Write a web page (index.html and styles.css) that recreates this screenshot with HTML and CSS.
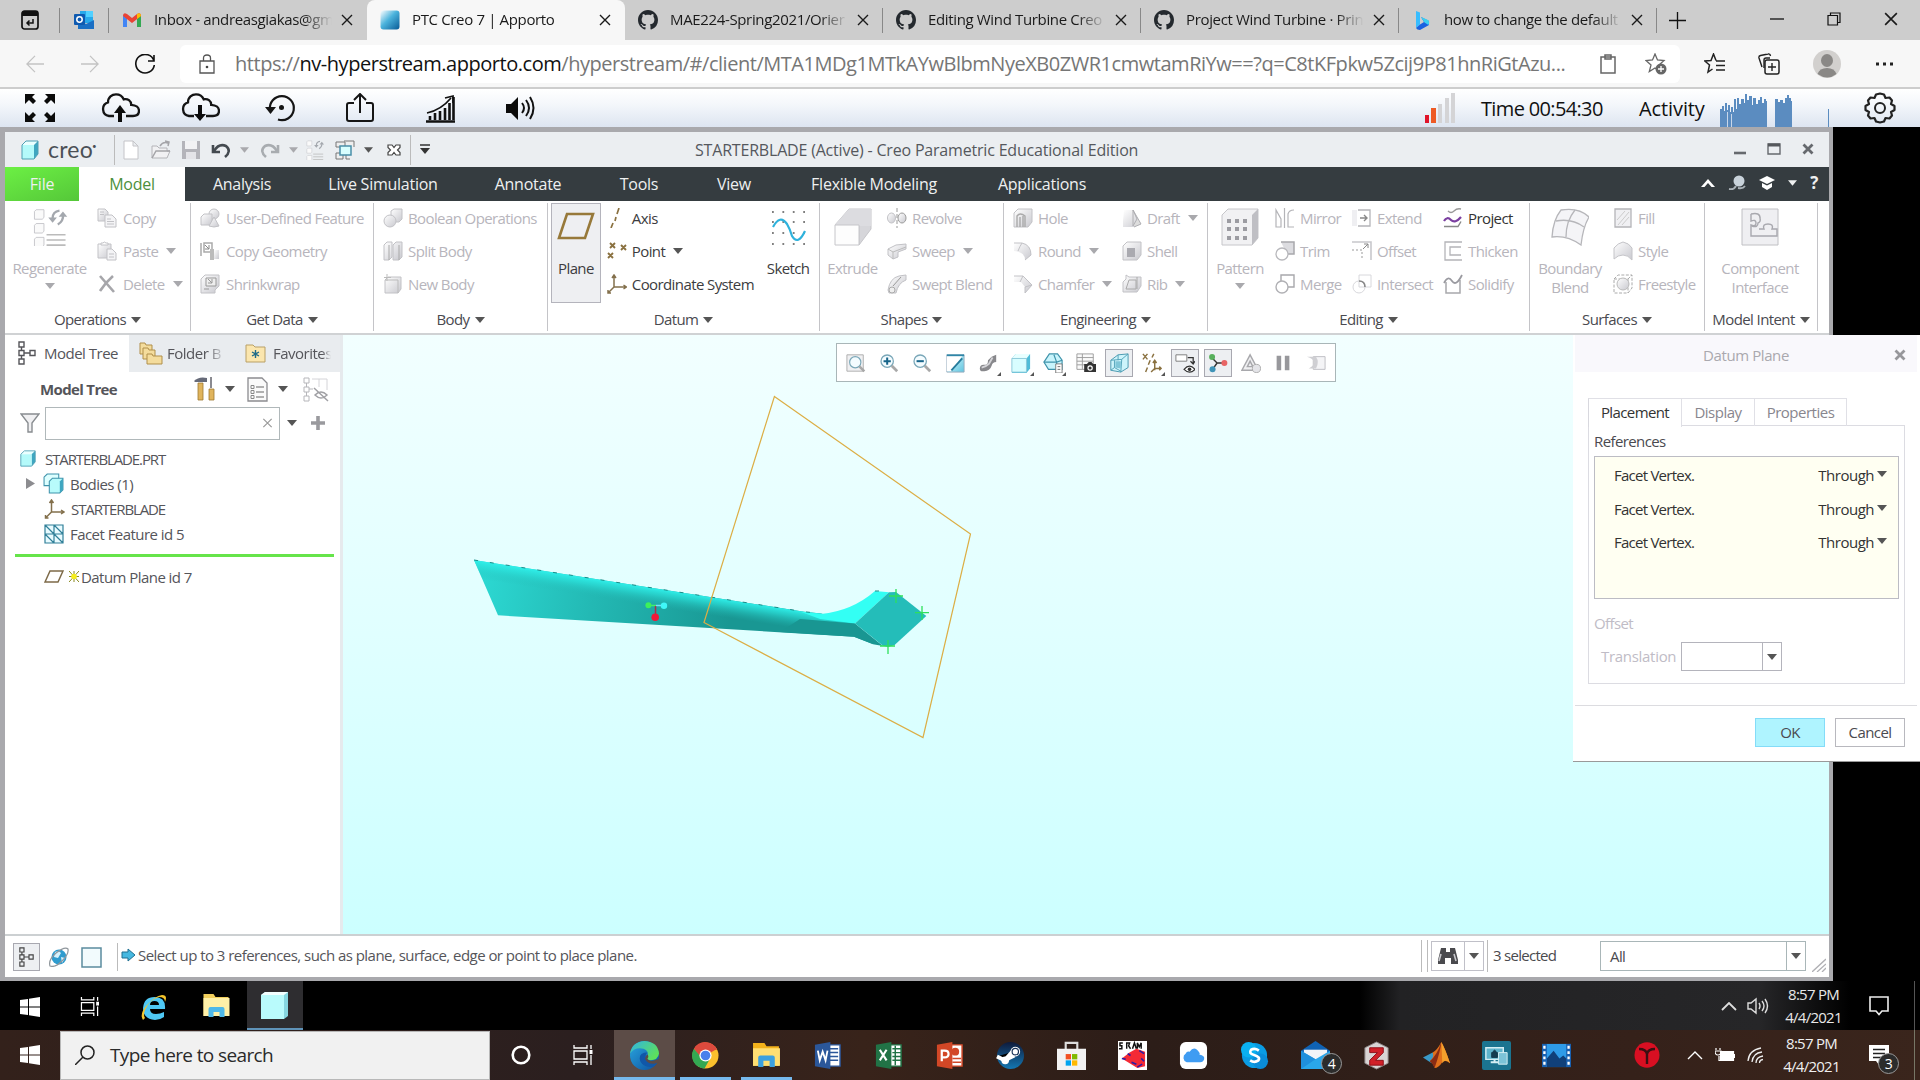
FILE: index.html
```html
<!DOCTYPE html>
<html lang="en">
<head>
<meta charset="utf-8">
<title>PTC Creo 7 | Apporto</title>
<link rel="stylesheet" href="styles.css">
</head>
<body>
<svg class="defs" aria-hidden="true">
<defs>
<linearGradient id="gCyan" x1="0" y1="0" x2="1" y2="1"><stop offset="0" stop-color="#e6ffff"/><stop offset="1" stop-color="#5fc4e0"/></linearGradient>
<linearGradient id="gSky" x1="0" y1="0" x2="1" y2="1"><stop offset="0" stop-color="#fff"/><stop offset=".45" stop-color="#4bb3dc"/><stop offset="1" stop-color="#075a96"/></linearGradient>
<linearGradient id="gGrey" x1="0" y1="0" x2="1" y2="1"><stop offset="0" stop-color="#fff"/><stop offset="1" stop-color="#c9c9cf"/></linearGradient>
<linearGradient id="gBlade" gradientUnits="userSpaceOnUse" x1="480" y1="580" x2="730" y2="620"><stop offset="0" stop-color="#2cd8d2"/><stop offset=".45" stop-color="#23b9b4"/><stop offset="1" stop-color="#199793"/></linearGradient>
<linearGradient id="gTop" gradientUnits="userSpaceOnUse" x1="600" y1="579.500" x2="597.200" y2="597.500"><stop offset="0" stop-color="#2ff0ea"/><stop offset=".35" stop-color="#2be0da" stop-opacity=".7"/><stop offset="1" stop-color="#23b9b4" stop-opacity="0"/></linearGradient>
<linearGradient id="gEdge" x1="0" y1="0" x2="1" y2="1"><stop offset="0" stop-color="#2aa8e0"/><stop offset="1" stop-color="#0c4f9e"/></linearGradient>
<linearGradient id="gEdge2" x1="0" y1="0" x2="1" y2=".6"><stop offset="0" stop-color="#2fb4e6"/><stop offset="1" stop-color="#5ee05a"/></linearGradient>
<linearGradient id="gSteam" x1="0" y1="0" x2="0" y2="1"><stop offset="0" stop-color="#0f1a3a"/><stop offset="1" stop-color="#1478b4"/></linearGradient>
<symbol id="x" viewBox="0 0 12 12"><path d="M1 1l10 10M11 1L1 11" fill="none" stroke="currentColor" stroke-width="1.4"/></symbol>
<symbol id="dn" viewBox="0 0 10 6"><path d="M0 0h10L5 6z" fill="currentColor"/></symbol>
<symbol id="gh" viewBox="0 0 16 16"><path fill="#24292e" d="M8 0C3.58 0 0 3.58 0 8c0 3.54 2.29 6.53 5.47 7.59.4.07.55-.17.55-.38 0-.19-.01-.82-.01-1.49-2.01.37-2.53-.49-2.69-.94-.09-.23-.48-.94-.82-1.13-.28-.15-.68-.52-.01-.53.63-.01 1.08.58 1.23.82.72 1.21 1.87.87 2.33.66.07-.52.28-.87.51-1.07-1.78-.2-3.64-.89-3.64-3.95 0-.87.31-1.59.82-2.15-.08-.2-.36-1.02.08-2.12 0 0 .67-.21 2.2.82.64-.18 1.32-.27 2-.27s1.36.09 2 .27c1.53-1.04 2.2-.82 2.2-.82.44 1.1.16 1.92.08 2.12.51.56.82 1.27.82 2.15 0 3.07-1.87 3.75-3.65 3.95.29.25.54.73.54 1.48 0 1.07-.01 1.93-.01 2.2 0 .21.15.46.55.38A8.01 8.01 0 0016 8c0-4.42-3.58-8-8-8z"/></symbol>
<symbol id="cloud" viewBox="0 0 40 30"><path d="M14 23H9a7 7 0 0 1-1-13.600C8 4 12 1.300 16 1.300c4 0 6.500 2 7.700 5 4-1 7.500 1.500 7.500 5.500 5 .2 7.800 3 7.800 6 0 3.500-2.500 5.200-6 5.200h-7" fill="none" stroke="#151515" stroke-width="2.300"/></symbol>
<symbol id="cube" viewBox="0 0 20 20"><path d="M2 5l4-4h12l-4 4z" fill="#eaffff"/><path d="M14 5l4-4v13l-4 5z" fill="#3fa6c0"/><path d="M2 5h12v14H2z" fill="#b4fafa"/><path d="M2 5l4-4h12v13l-4 5H2z" fill="none" stroke="#4f9fb4" stroke-width="1"/></symbol>
<symbol id="win" viewBox="0 0 20 20"><path d="M0 3l8-1v7.500H0zM9 1.800L20 0v9.500H9zM0 10.500h8V18l-8-1zM9 10.500h11V20L9 18.200z" fill="#fff"/></symbol>
<symbol id="tview" viewBox="0 0 20 20"><path d="M1 0v3h13V0M1 20v-3h13v3M1 6h13v8H1zM18 0v4M18 10v10" fill="none" stroke="#fff" stroke-width="1.300"/><path d="M16.500 5h3v4h-3z" fill="#fff"/></symbol>
<symbol id="folder" viewBox="0 0 28 28"><path d="M1 2h11l2 3h12v19H1z" fill="#f3b21b"/><path d="M1 7h26v17H1z" fill="#ffdf73"/><path d="M6 25v-9q0-2 2-2h12q2 0 2 2v9h-5v-6h-6v6z" fill="#3ba0e0"/></symbol>
<symbol id="tree" viewBox="0 0 18 24"><path d="M1 1h5v5H1zM1 9.500h5v5H1zM1 18h5v5H1zM12 9.500h5v5h-5zM3.500 6v3.500M3.500 14.500V18M6 12h6" fill="none" stroke="currentColor" stroke-width="1.400"/></symbol>
<symbol id="csys" viewBox="0 0 20 20"><path d="M7 13V2M7 13h12M7 13l-6 6M5 4l2-3 2 3M16.500 11l3 2-3 2M1 16v3h3" fill="none" stroke="#83704c" stroke-width="1.500"/></symbol>
<symbol id="copy" viewBox="0 0 20 20"><path d="M1 1h7l3 3v9H1z" fill="url(#gGrey)" stroke="currentColor"/><path d="M8 7h7l4 4v8H8zM10 11h4M10 13.500h7M10 16h7M3 4h4M3 6.500h4" fill="#f4f4f6" stroke="currentColor"/></symbol>
<symbol id="paste" viewBox="0 0 20 20"><path d="M1 3h13v14H1z" fill="url(#gGrey)" stroke="currentColor"/><path d="M4 4V2h2q1-2 3 0h2v2z" fill="#fff" stroke="currentColor"/><path d="M10 8h5l4 4v7h-9zM12 13h5M12 16h5" fill="#f4f4f6" stroke="currentColor"/></symbol>
<symbol id="del" viewBox="0 0 20 20"><path d="M3 2q7 8 14 16M16 2Q8 9 3 17" fill="none" stroke="#a6a6aa" stroke-width="2.600"/></symbol>
<symbol id="udf" viewBox="0 0 20 20"><circle cx="14" cy="6" r="5" fill="url(#gGrey)" stroke="currentColor"/><path d="M1 9l3-3h8v9l-2 2H1z" fill="url(#gGrey)" stroke="currentColor"/><path d="M14 9l5 9q-5 2-10 0z" fill="url(#gGrey)" stroke="currentColor"/></symbol>
<symbol id="cgeo" viewBox="0 0 20 20"><path d="M1 2v13M4 2h8v9H4z" fill="none" stroke="#aaa" stroke-width="1.500"/><path d="M5 4l4 4M9 4v4H5" stroke="#888" fill="none"/><path d="M10 8h4v11h-4z" fill="#bbb"/><path d="M14 9h5v9h-5z" fill="url(#gGrey)"/></symbol>
<symbol id="shr" viewBox="0 0 20 20"><path d="M1 5l4-4h14v11l-4 4v3H1z" fill="url(#gGrey)" stroke="currentColor"/><path d="M6 4h10v8H6zM8 5l4 4M12 5v4H8M4 15h5" fill="#eee" stroke="#999"/></symbol>
<symbol id="bool" viewBox="0 0 20 20"><path d="M8 3l3-2h8v10l-3 3H8z" fill="url(#gGrey)" stroke="currentColor"/><circle cx="7" cy="13" r="6" fill="url(#gGrey)" stroke="currentColor"/></symbol>
<symbol id="split" viewBox="0 0 20 20"><path d="M1 4l3-3h5v15l-3 3H1zM10 4l3-3h6v15l-3 3h-6z" fill="url(#gGrey)" stroke="currentColor"/><path d="M6 4v15M16 4v15" stroke="#aaa"/></symbol>
<symbol id="newb" viewBox="0 0 20 20"><path d="M2 6l3-3h13v12l-3 4H2z" fill="url(#gGrey)" stroke="currentColor"/><path d="M2 6h13v13" fill="none" stroke="#bbb"/><path d="M4 0v7M1 3.500h7" stroke="#bbb"/></symbol>
<symbol id="rev" viewBox="0 0 20 20"><path d="M10 0v20" stroke="#999" stroke-dasharray="4 2"/><ellipse cx="4.500" cy="10" rx="4" ry="5" fill="url(#gGrey)" stroke="currentColor"/><ellipse cx="15" cy="10" rx="4" ry="5" fill="url(#gGrey)" stroke="#999"/></symbol>
<symbol id="sweep" viewBox="0 0 20 20"><path d="M1 8l8-4 10-1v5l-8 3v5l-5 2-5-4z" fill="url(#gGrey)" stroke="currentColor"/><path d="M1 8l5 3 13-5M6 11v7" fill="none" stroke="#bbb"/></symbol>
<symbol id="sblend" viewBox="0 0 20 20"><path d="M1 16q2-12 11-14l7-1v5q-8 3-10 13H2z" fill="url(#gGrey)" stroke="currentColor"/><circle cx="5" cy="16" r="3" fill="#eee" stroke="#aaa"/><path d="M6 12l8-9" stroke="#999"/></symbol>
<symbol id="hole" viewBox="0 0 20 20"><path d="M1 5l4-4h14v13l-4 5H1z" fill="url(#gGrey)" stroke="currentColor"/><path d="M4 19V8q3-4 8 0v11M7 19V9M10 8v11" fill="none" stroke="#aaa" stroke-width="1.400"/></symbol>
<symbol id="round" viewBox="0 0 20 20"><path d="M1 2h8q9 2 9 12l-6 5q0-8-11-9z" fill="url(#gGrey)"/><path d="M1 2h8q9 2 9 12l-6 5M9 2q-2 3-4 8" fill="none" stroke="currentColor"/></symbol>
<symbol id="cham" viewBox="0 0 20 20"><path d="M1 2h9l9 9-7 8v-6l-4-5H1z" fill="url(#gGrey)"/><path d="M1 2h9l9 9-7 8v-6M10 2L7 8M19 11l-7 2" fill="none" stroke="currentColor"/></symbol>
<symbol id="draft" viewBox="0 0 20 20"><path d="M2 2h9l8 14-7 3H1v-6z" fill="url(#gGrey)"/><path d="M11 2v16l4-7zM11 2l8 14-7 3" fill="#ddd" stroke="#b0b0b4"/></symbol>
<symbol id="shell" viewBox="0 0 20 20"><path d="M1 5l4-4h14v13l-4 5H1z" fill="url(#gGrey)" stroke="currentColor"/><path d="M5 7h8v9H5z" fill="#aaaab0"/></symbol>
<symbol id="rib" viewBox="0 0 20 20"><path d="M1 8l3-3V1l3 2h12v9l-4 6H1z" fill="url(#gGrey)" stroke="currentColor"/><path d="M4 15l3-9h7v9zM15 3v12" fill="none" stroke="#aaa"/></symbol>
<symbol id="mirror" viewBox="0 0 20 20"><path d="M1 19V2l5 9v8zM19 19h-6V6q1-4 6-4M9.500 0v20" fill="none" stroke="#b4b4b8" stroke-width="1.200"/></symbol>
<symbol id="trim" viewBox="0 0 20 20"><path d="M6 1h13v12h-7" fill="#dcdce0" stroke="#a8a8ac" stroke-width="1.500"/><circle cx="7" cy="13" r="6" fill="#fff" stroke="#b8b8bc" stroke-width="1.300"/></symbol>
<symbol id="merge" viewBox="0 0 20 20"><path d="M6 7V1h13v12h-6" fill="none" stroke="#a8a8ac" stroke-width="1.400"/><circle cx="7" cy="13" r="6" fill="none" stroke="#b0b0b4" stroke-width="1.400"/></symbol>
<symbol id="ext" viewBox="0 0 20 20"><path d="M0 2h5v16H0" fill="#efeff2"/><path d="M6 2h12v16H6" fill="none" stroke="#b4b4b8" stroke-width="1.300"/><path d="M8 10h7M12 7l3 3-3 3" fill="none" stroke="#888" stroke-width="1.400"/></symbol>
<symbol id="off" viewBox="0 0 20 20"><path d="M0 1h19v18" fill="none" stroke="#c8c8cc" stroke-width="1.600"/><path d="M0 9h10v10" fill="none" stroke="#999" stroke-dasharray="2 2"/><path d="M11 8l5-5M12 3h4v4" fill="none" stroke="#888"/></symbol>
<symbol id="inter" viewBox="0 0 20 20"><path d="M7 1h12v12H7z" fill="none" stroke="#d8d8dc"/><circle cx="7" cy="13" r="6" fill="none" stroke="#d8d8dc"/><path d="M7 7q6 0 6 6" fill="none" stroke="#888" stroke-width="1.600"/></symbol>
<symbol id="proj" viewBox="0 0 20 20"><path d="M5 3q3 3 6 0t7-2" fill="none" stroke="#999" stroke-width="1.300"/><path d="M1 13q3-5 7-1t10-3" fill="none" stroke="#7b3fa0" stroke-width="2.200"/><path d="M1 18.500h14l3-5" fill="none" stroke="#888" stroke-width="1.400"/></symbol>
<symbol id="thick" viewBox="0 0 20 20"><path d="M19 1H2v18h17M18 6H7v8h11" fill="none" stroke="#b4b4b8" stroke-width="1.300"/></symbol>
<symbol id="solid" viewBox="0 0 20 20"><path d="M3 8v11h14V6" fill="none" stroke="#a8a8ac" stroke-width="1.500"/><path d="M1 9q4-8 8-2t10-6" fill="none" stroke="#9a9aa0" stroke-width="1.800"/></symbol>
<symbol id="fill" viewBox="0 0 20 20"><path d="M2 1h16v18H2z" fill="#f0f0f3" stroke="#b4b4b8" stroke-width="1.300"/><path d="M4 12l8-9M5 17L16 4M9 17l7-8" stroke="#ccc"/></symbol>
<symbol id="style" viewBox="0 0 20 20"><path d="M1 7q4-5 9-6 6 1 9 6v12q-4-5-9-5t-9 4z" fill="url(#gGrey)" stroke="#c4c4c8"/></symbol>
<symbol id="free" viewBox="0 0 20 20"><path d="M1 5l4-4h14v13l-4 5H1zM1 5h14v14M15 5l4-4" fill="none" stroke="#aaa" stroke-dasharray="3 1.500"/><circle cx="10" cy="10" r="6" fill="url(#gGrey)" stroke="#bbb"/></symbol>
<symbol id="mag" viewBox="0 0 22 22"><circle cx="9" cy="9" r="6.800" fill="#f4fcff" stroke="#7aa7b8" stroke-width="1.400"/><path d="M14 14l6 6" stroke="#a8a8a8" stroke-width="3"/></symbol>
<symbol id="bodies" viewBox="0 0 20 20"><path d="M1 4l3-3h11v11H1z" fill="#dff" stroke="#3f93ab"/><path d="M6 8l3-3h10v11l-3 3H6z" fill="#b8fbfb" stroke="#3f93ab"/><path d="M16 8l3-3v11l-3 3z" fill="#3fa6c0"/></symbol>
<symbol id="regen" viewBox="0 0 38 44"><path d="M1 4l2-2h9v9l-2 2H1zM1 20l2-2h9v9l-2 2H1zM1 36l2-2h9v9l-2 2H1z" fill="#fafafa" stroke="#c2c2c6"/><path d="M15 31h22M15 37h22M15 43h22" stroke="#bbb" stroke-width="1.800"/><path d="M22 12q0-8 8-9M34 7q1 8-6 12" fill="none" stroke="#a4a8ae" stroke-width="2.600"/><path d="M17 11h10l-5 6zM29 10h10l-5-6z" fill="#a4a8ae"/></symbol>
</defs>
</svg>

<div class="tabs">
  <div class="pin p1"><svg width="20" height="20" viewBox="0 0 20 20"><rect x="2" y="1" width="16" height="18" rx="2.500" fill="none" stroke="#111" stroke-width="1.700"/><path d="M2 6V3q0-2 2-2h12q2 0 2 2v3z" fill="#111"/><path d="M13 9v4H7M9.500 10.500L7 13l2.500 2.500" fill="none" stroke="#111" stroke-width="1.500"/></svg></div>
  <div class="pin p2"><svg width="20" height="20" viewBox="0 0 20 20"><path d="M6 1h13v12H6z" fill="#28a8ea"/><path d="M12 1h7v6h-7z" fill="#50d0ff"/><path d="M4 10l8 4 8-4v9H4z" fill="#1a6fc4"/><rect x="0" y="4" width="11" height="11" rx="1" fill="#0f5ab0"/><circle cx="5.500" cy="9.500" r="2.700" fill="none" stroke="#fff" stroke-width="1.500"/></svg></div>
  <div class="tab"><svg class="fav" viewBox="0 0 20 16"><path d="M1 15V3l4 3v9z" fill="#4285f4"/><path d="M15 15V6l4-3v12z" fill="#34a853"/><path d="M1 4q0-4 4-2l5 4 5-4q4-2 4 2l-9 7z" fill="#ea4335"/><path d="M15 2q4-2 4 2l-4 3z" fill="#fbbc04"/></svg><span class="tt">Inbox - andreasgiakas@gm</span><svg class="cx"><use href="#x"/></svg></div>
  <div class="tab on"><svg class="fav" viewBox="0 0 20 20"><rect x=".5" y=".5" width="19" height="19" rx="3" fill="url(#gSky)"/></svg><span class="tt">PTC Creo 7 | Apporto</span><svg class="cx"><use href="#x"/></svg></div>
  <div class="tab"><svg class="fav"><use href="#gh"/></svg><span class="tt">MAE224-Spring2021/Orier</span><svg class="cx"><use href="#x"/></svg></div>
  <div class="tab"><svg class="fav"><use href="#gh"/></svg><span class="tt">Editing Wind Turbine Creo</span><svg class="cx"><use href="#x"/></svg></div>
  <div class="tab"><svg class="fav"><use href="#gh"/></svg><span class="tt">Project Wind Turbine · Prin</span><svg class="cx"><use href="#x"/></svg></div>
  <div class="tab"><svg class="fav" viewBox="0 0 20 20"><path d="M4 1l4 1.500v12L4 18z" fill="#37bdff"/><path d="M4 18l4-3.500 4-2.500-3-5 8 4v4l-9 5q-3 0-4-2z" fill="#1b62e0"/><path d="M9 7l7 3q2 1.500.500 5l-4-2.500z" fill="#3cd0f0"/></svg><span class="tt">how to change the default</span><svg class="cx"><use href="#x"/></svg></div>
  <svg class="plus" viewBox="0 0 18 18"><path d="M9 0v18M0 9h18" stroke="#111" stroke-width="1.400"/></svg>
  <div class="winbtns"><svg width="14" height="14" viewBox="0 0 14 14"><path d="M0 7h14" stroke="#111" stroke-width="1.300"/></svg><svg width="14" height="14" viewBox="0 0 14 14"><path d="M1 3.500h9.500V13H1zM3.500 3.500V1H13v9.500h-2.500" fill="none" stroke="#111" stroke-width="1.200"/></svg><svg width="14" height="14"><use href="#x"/></svg></div>
</div>

<div class="address">
  <svg class="nav" viewBox="0 0 20 20"><path d="M20 10H1M10 1l-9 9 9 9" fill="none" stroke="#c3c3c3" stroke-width="1.400"/></svg>
  <svg class="nav" viewBox="0 0 20 20"><path d="M0 10h19M10 1l9 9-9 9" fill="none" stroke="#c3c3c3" stroke-width="1.400"/></svg>
  <svg class="nav dark" viewBox="0 0 20 20"><path d="M19 7A9.300 9.300 0 1 0 19.300 11M19 1v6h-6" fill="none" stroke="#111" stroke-width="1.600"/></svg>
  <div class="urlbox">
    <svg width="16" height="20" viewBox="0 0 16 20"><path d="M1 7h14v12H1zM4.500 7V4q0-3 3.500-3t3.500 3v3" fill="none" stroke="#555" stroke-width="1.300"/><circle cx="8" cy="13" r="1.300" fill="#444"/></svg>
    <div class="url">https://<b>nv-hyperstream.apporto.com</b>/hyperstream/#/client/MTA1MDg1MTkAYwBlbmNyeXB0ZWR1cmwtamRiYw==?q=C8tKFpkw5Zcij9P81hnRiGtAzu...</div>
    <svg width="16" height="20" viewBox="0 0 16 20"><path d="M1 3h14v16H1zM5 1h6v4H5z" fill="none" stroke="#666" stroke-width="1.500"/></svg>
    <svg class="star" width="22" height="22" viewBox="0 0 22 22"><path d="M10 1l2.500 6 6.500.6-5 4.400 1.500 6.500L10 15l-5.700 3.500L6 12 1 7.600l6.500-.6z" fill="none" stroke="#666" stroke-width="1.300"/><circle cx="16" cy="16" r="5.500" fill="#666"/><path d="M16 13v6M13 16h6" stroke="#fff" stroke-width="1.300"/></svg>
  </div>
  <div class="tools">
    <svg width="22" height="22" viewBox="0 0 22 22"><path d="M12 7.500L9.500 1 7 7.500.800 8 5.500 12l-1.500 7 4.500-3M12 8h9M12 12.500h9M12 17h9" fill="none" stroke="#222" stroke-width="1.500"/></svg>
    <svg width="22" height="22" viewBox="0 0 22 22"><path d="M4 14l-3-9q-.500-2 1.500-2.500L10 1q2-.500 2.500 2M6 15V7q0-2 2-2h4" fill="none" stroke="#222" stroke-width="1.400"/><rect x="7" y="7" width="14" height="14" rx="2" fill="none" stroke="#222" stroke-width="1.500"/><path d="M14 10v8M10 14h8" stroke="#222" stroke-width="1.400"/></svg>
    <svg width="28" height="28" viewBox="0 0 28 28"><circle cx="14" cy="14" r="14" fill="#d2d0ce"/><ellipse cx="14" cy="10.500" rx="6" ry="6.500" fill="#8a8886"/><path d="M4.500 24q2-6 9.500-6t9.500 6q-9 7-19 0z" fill="#8a8886"/></svg>
    <svg width="18" height="4" viewBox="0 0 18 4"><path d="M0 .5h3v3H0zM7 .5h3v3H7zM14 .5h3v3h-3z" fill="#222"/></svg>
  </div>
</div>

<div class="apporto">
  <svg viewBox="0 0 40 30"><path d="M5 1h10l-3 3 4 4-3 3-4-4-4 4zM35 1H25l3 3-4 4 3 3 4-4 4 4zM5 29h10l-3-3 4-4-3-3-4 4-4-4zM35 29H25l3-3-4-4 3-3 4 4 4-4z" fill="#0b0b0b"/></svg>
  <svg viewBox="0 0 40 30"><use href="#cloud"/><path d="M20 12l6 8h-4v9h-4v-9h-4z" fill="#0b0b0b"/></svg>
  <svg viewBox="0 0 40 30"><use href="#cloud"/><path d="M20 28l6-7h-4v-9h-4v9h-4z" fill="#0b0b0b"/></svg>
  <svg viewBox="0 0 40 30"><path d="M10 17A12 12 0 1 1 18 26.500" fill="none" stroke="#151515" stroke-width="2.200"/><path d="M5 14h11l-5.500 7z" fill="#151515"/><circle cx="21.500" cy="14.500" r="2.500" fill="#151515"/></svg>
  <svg viewBox="0 0 40 30"><path d="M14 10H9q-2 0-2 2v14q0 2 2 2h22q2 0 2-2V12q0-2-2-2h-5M20 20V2M14 7l6-6 6 6" fill="none" stroke="#151515" stroke-width="2"/></svg>
  <svg viewBox="0 0 40 30"><path d="M6 28.500h29M10 27v-4M15 27v-7M20 27v-9M25 27V15M29.500 27V10M33.500 27V4" stroke="#111" stroke-width="2.600"/><path d="M7 20Q21 17 31 5M25 5l8-2v7" fill="none" stroke="#111" stroke-width="1.700"/></svg>
  <svg viewBox="0 0 40 30"><path d="M6 11h5l7-7v23l-7-7H6z" fill="#0b0b0b"/><path d="M22 10q4 5 0 10M26 7q6 8 0 16M30 4q7 11 0 22" fill="none" stroke="#111" stroke-width="2"/></svg>
  <div class="fillgap"></div>
  <svg class="sig" viewBox="0 0 30 30"><path d="M0 22h4v8H0z" fill="#e0142a"/><path d="M6 15h5v15H6z" fill="#ee5a24"/><path d="M13 11h4v19h-4zM20 5h4v25h-4zM26 0h4v30h-4z" fill="#d4d4d6"/></svg>
  <span class="atime">Time 00:54:30</span><span class="aact">Activity</span>
  <svg class="spark" viewBox="0 0 110 33" preserveAspectRatio="none"><path d="M0 33V15h2v-3h2v5h1V9h2v7h1V11h2v7h1V13h2v5h1V5h2v10h1V4h2v6h2V5h3v4h1V0h2v6h2V2h3v9h1V4h3v6h2V6h2V3h2v6h2V5h2v2h1V33zM55 33V5h3v3h2V6h3v3h2V4h2V1h2v3h2v3h1v26z" fill="#5b8cc0"/><path d="M11.500 33V20M7.500 33V18" stroke="#e4ebf5" stroke-width=".8"/><path d="M108.500 33V15" stroke="#5b8cc0"/></svg>
  <svg class="gear" viewBox="0 0 32 32"><path d="M16 1.500l4 1 1.500 3.500 4-.5 2.500 3-1 3.500 3.500 2v4l-3.500 2 1 3.500-2.500 3-4-.5-1.500 3.500-4 1-4-1-1.500-3.500-4 .500-2.500-3 1-3.500-3.500-2v-4l3.500-2-1-3.500 2.500-3 4 .500L12 2.500z" fill="none" stroke="#222" stroke-width="2.200" stroke-linejoin="round"/><circle cx="16" cy="16" r="5" fill="none" stroke="#222" stroke-width="2"/></svg>
</div>

<div class="remote">
<div class="creo">
  <div class="ctitle">
    <svg class="clogo" width="20" height="20"><use href="#cube"/></svg><span class="cname">creo<sup>•</sup></span>
    <div class="qat">
      <svg viewBox="0 0 20 20"><path d="M3 1h9l5 5v13H3zM12 1v5h5" fill="#fff" stroke="#c4c4c8"/></svg>
      <svg viewBox="0 0 20 20"><path d="M1 18V6h5l2 2h8v3l3 0-3 7z" fill="#f1f1f3" stroke="#b4b4b8"/><path d="M1 18l4-7h14M9 6q3-5 8-3M14 1l4 1-1 4" fill="none" stroke="#a4a4a8" stroke-width="1.500"/></svg>
      <svg viewBox="0 0 20 20"><path d="M1 1h18v18H1z" fill="#b4b4ba"/><path d="M4 1h12v8H4z" fill="#f2f2f4"/><path d="M5 12h10v7H5z" fill="#e4e4e8"/></svg>
      <svg viewBox="0 0 20 20"><path d="M2 5v7h7" fill="none" stroke="#444a50" stroke-width="2.600"/><path d="M3 11q5-8 12-5 6 5-1 11" fill="none" stroke="#444a50" stroke-width="2.600"/></svg>
      <svg class="ar l"><use href="#dn"/></svg>
      <svg viewBox="0 0 20 20"><path d="M18 5v7h-7" fill="none" stroke="#a8acb0" stroke-width="2.600"/><path d="M17 11Q12 3 5 6q-6 5 1 11" fill="none" stroke="#a8acb0" stroke-width="2.600"/></svg>
      <svg class="ar l n"><use href="#dn"/></svg>
      <svg><use href="#regen"/></svg>
      <svg viewBox="0 0 20 20"><path d="M1 2h9v5H1zM9 1h10v6M1 13h7v6H1zM11 15v4h4" fill="#eee" stroke="#777"/><path d="M5 6h11v9H5z" fill="#d8ffff" stroke="#4a8fa8" stroke-width="1.500"/></svg>
      <svg class="ar"><use href="#dn"/></svg>
      <svg viewBox="0 0 20 20"><path d="M4 5h4l2 2.500L12 5h4v2.500L13.500 10l2.500 2.500V15h-4l-2-2.500L8 15H4v-2.500L6.500 10 4 7.500z" fill="#fff" stroke="#444" stroke-width="1.200"/></svg>
    </div>
    <svg class="qend" width="12" height="12" viewBox="0 0 12 12"><path d="M1 1h10" stroke="#333" stroke-width="1.500"/><path d="M1 4h10l-5 6z" fill="#333"/></svg>
    <span class="cdoc">STARTERBLADE (Active) - Creo Parametric Educational Edition</span>
    <div class="cbtns"><svg viewBox="0 0 14 14"><path d="M1 11h12" stroke="#66696e" stroke-width="2.600"/></svg><svg viewBox="0 0 14 14"><path d="M1 2h12v10H1z" fill="none" stroke="#66696e" stroke-width="1.400"/><path d="M1 3h12" stroke="#55585c" stroke-width="3"/></svg><svg viewBox="0 0 14 14"><path d="M2.500 2.500l9 9M11.500 2.500l-9 9" stroke="#66696e" stroke-width="2.800"/></svg></div>
  </div>
  <div class="rtabs">
    <span class="file">File</span><span class="model">Model</span><span class="w1">Analysis</span><span class="w2">Live Simulation</span><span class="w3">Annotate</span><span class="w4">Tools</span><span class="w5">View</span><span class="w6">Flexible Modeling</span><span class="w7">Applications</span>
    <div class="rright"><svg width="14" height="8" viewBox="0 0 14 8"><path d="M0 8l7-8 7 8-3.500 0L7 4 3.500 8z" fill="#fff"/></svg><svg width="18" height="18" viewBox="0 0 18 18"><circle cx="11" cy="7" r="5.500" fill="#c8d2da"/><path d="M1 15q5 1 7-3M10 14q5 1 7-2" stroke="#aab2b8" stroke-width="1.800" fill="none"/></svg><svg width="16" height="14" viewBox="0 0 16 14"><path d="M8 0l8 4-8 4-8-4z" fill="#fff"/><path d="M3 7l5 2.500L13 7v4l-5 3-5-3z" fill="#fff"/></svg><svg width="9" height="6"><use href="#dn"/></svg><b>?</b></div>
  </div>
  <div class="ribbon">
    <section class="g g1"><div class="gb">
      <div class="big off"><svg class="bi"><use href="#regen"/></svg><span>Regenerate</span><svg class="ar l"><use href="#dn"/></svg></div>
      <div class="col off"><div><svg><use href="#copy"/></svg>Copy</div><div><svg><use href="#paste"/></svg>Paste<svg class="ar l"><use href="#dn"/></svg></div><div><svg><use href="#del"/></svg>Delete<svg class="ar l"><use href="#dn"/></svg></div></div>
    </div><h3>Operations<svg class="ar"><use href="#dn"/></svg></h3></section>
    <section class="g g2"><div class="gb">
      <div class="col off"><div><svg><use href="#udf"/></svg>User-Defined Feature</div><div><svg><use href="#cgeo"/></svg>Copy Geometry</div><div><svg><use href="#shr"/></svg>Shrinkwrap</div></div>
    </div><h3>Get Data<svg class="ar"><use href="#dn"/></svg></h3></section>
    <section class="g g3"><div class="gb">
      <div class="col off"><div><svg><use href="#bool"/></svg>Boolean Operations</div><div><svg><use href="#split"/></svg>Split Body</div><div><svg><use href="#newb"/></svg>New Body</div></div>
    </div><h3>Body<svg class="ar"><use href="#dn"/></svg></h3></section>
    <section class="g g4"><div class="gb">
      <div class="big plane"><svg class="bi" viewBox="0 0 38 38"><path d="M10 6h26l-8 24H2z" fill="none" stroke="#97793a" stroke-width="2.600"/></svg><span>Plane</span></div>
      <div class="col"><div><svg viewBox="0 0 20 20"><path d="M12 0l-2 6M9 9l-1 4M6 15l-2 5" stroke="#8a7140" stroke-width="1.700"/></svg>Axis</div><div><svg viewBox="0 0 20 20"><path d="M3 2l5 5M8 2L3 7M14 4l5 5M19 4l-5 5M1 12l5 5M6 12l-5 5" stroke="#8a7140" stroke-width="1.900"/></svg>Point<svg class="ar"><use href="#dn"/></svg></div><div><svg><use href="#csys"/></svg>Coordinate System</div></div>
      <div class="big sk"><svg class="bi" viewBox="0 0 38 38"><path d="M3 4h34M3 14h34M3 25h34M3 36h34" stroke="#555" stroke-width="1.700" stroke-dasharray="1.800 8.600"/><path d="M4 19q7-13 14-3 3 5 5 12 6 10 13-5" fill="none" stroke="#2fb2dc" stroke-width="2.200"/></svg><span>Sketch</span></div>
    </div><h3>Datum<svg class="ar"><use href="#dn"/></svg></h3></section>
    <section class="g g5"><div class="gb">
      <div class="big off"><svg class="bi" viewBox="0 0 38 38"><path d="M1 17L15 1h22L25 17z" fill="#f4f4f6" stroke="#c6c6ca"/><path d="M25 17L37 1v20L25 37z" fill="#d6d6da" stroke="#c6c6ca"/><path d="M1 17L15 1h22v17H16l-3 4z" fill="#dcdce0"/><path d="M1 17h24v20H1z" fill="#fdfdfd" stroke="#c6c6ca"/></svg><span>Extrude</span></div>
      <div class="col off"><div><svg><use href="#rev"/></svg>Revolve</div><div><svg><use href="#sweep"/></svg>Sweep<svg class="ar l"><use href="#dn"/></svg></div><div><svg><use href="#sblend"/></svg>Swept Blend</div></div>
    </div><h3>Shapes<svg class="ar"><use href="#dn"/></svg></h3></section>
    <section class="g g6"><div class="gb">
      <div class="col off"><div><svg><use href="#hole"/></svg>Hole</div><div><svg><use href="#round"/></svg>Round<svg class="ar l"><use href="#dn"/></svg></div><div><svg><use href="#cham"/></svg>Chamfer<svg class="ar l"><use href="#dn"/></svg></div></div>
      <div class="col off c2"><div><svg><use href="#draft"/></svg>Draft<svg class="ar l"><use href="#dn"/></svg></div><div><svg><use href="#shell"/></svg>Shell</div><div><svg><use href="#rib"/></svg>Rib<svg class="ar l"><use href="#dn"/></svg></div></div>
    </div><h3>Engineering<svg class="ar"><use href="#dn"/></svg></h3></section>
    <section class="g g7"><div class="gb">
      <div class="big off"><svg class="bi" viewBox="0 0 38 38"><path d="M1 7l6-6h30v29l-6 7H1z" fill="#f1f1f3" stroke="#c6c6ca"/><path d="M31 7l6-6v29l-6 7z" fill="#bfbfc4"/><path d="M6 11h4v4H6zM14 11h4v4h-4zM22 11h4v4h-4zM6 19h4v4H6zM14 19h4v4h-4zM22 19h4v4h-4zM6 28h4v4H6zM14 28h4v4h-4zM22 28h4v4h-4z" fill="#9c9ca2"/></svg><span>Pattern</span><svg class="ar l"><use href="#dn"/></svg></div>
      <div class="col off"><div><svg><use href="#mirror"/></svg>Mirror</div><div><svg><use href="#trim"/></svg>Trim</div><div><svg><use href="#merge"/></svg>Merge</div></div>
      <div class="col off c2"><div><svg><use href="#ext"/></svg>Extend</div><div><svg><use href="#off"/></svg>Offset</div><div><svg><use href="#inter"/></svg>Intersect</div></div>
      <div class="col off c3"><div class="act"><svg><use href="#proj"/></svg>Project</div><div><svg><use href="#thick"/></svg>Thicken</div><div><svg><use href="#solid"/></svg>Solidify</div></div>
    </div><h3>Editing<svg class="ar"><use href="#dn"/></svg></h3></section>
    <section class="g g8"><div class="gb">
      <div class="big off"><svg class="bi" viewBox="0 0 38 38"><path d="M10 2q18-3 28 7-6 10-8 28Q16 27 1 29 2 12 10 2z" fill="#f4f4f7" stroke="#b6b6ba" stroke-width="1.300"/><path d="M24 2Q15 13 15 29M5 13q16-3 28 6" fill="none" stroke="#b6b6ba" stroke-width="1.300"/></svg><span>Boundary<br>Blend</span></div>
      <div class="col off"><div><svg><use href="#fill"/></svg>Fill</div><div><svg><use href="#style"/></svg>Style</div><div><svg><use href="#free"/></svg>Freestyle</div></div>
    </div><h3>Surfaces<svg class="ar"><use href="#dn"/></svg></h3></section>
    <section class="g g9"><div class="gb">
      <div class="big off"><svg class="bi" viewBox="0 0 38 38"><path d="M1 1h36v36H1z" fill="#efeff2" stroke="#c0c0c4"/><path d="M10 6v7q5-2 5 2t-5 2v11h26v-7h-5q2-5-4-5t-4 5h-5M10 6q9-2 9 4 1 4-2 5 0 5-6 3" fill="none" stroke="#a8a8ae" stroke-width="1.400"/></svg><span>Component<br>Interface</span></div>
    </div><h3>Model Intent<svg class="ar"><use href="#dn"/></svg></h3></section>
  </div>

  <div class="work">
    <aside class="side">
      <div class="stabs">
        <span class="st on"><svg width="18" height="24"><use href="#tree"/></svg><i>Model Tree</i></span>
        <span class="st b"><svg width="24" height="24" viewBox="0 0 24 24"><g fill="#f4dc9c" stroke="#b08f4a"><path d="M1 2h5l1 2h6v9H1z"/><path d="M4 7h5l1 2h6v9H4z"/><path d="M8 13h5l1 2h9v8H8z"/></g></svg><i>Folder B</i></span>
        <span class="st c"><svg width="21" height="20" viewBox="0 0 21 20"><path d="M1 2h7l2 2h10v15H1z" fill="#fbe6ae" stroke="#b9a066"/><path d="M10.500 7v8M7 9l7 4M14 9l-7 4" stroke="#1e6a88" stroke-width="1.400"/></svg><i>Favorites</i></span>
      </div>
      <div class="srow"><b>Model Tree</b>
        <svg class="hm" width="22" height="26" viewBox="0 0 22 26"><path d="M1 5q5-5 13-3v4H2z" fill="#666a78"/><path d="M5 7h5v17H5z" fill="#e0b45c" stroke="#a07a30" stroke-width=".8"/><path d="M18 1v11" stroke="#8a8a90" stroke-width="2"/><path d="M16 13h5v11h-5z" fill="#e0b45c" stroke="#a07a30" stroke-width=".8"/></svg>
        <svg class="ar"><use href="#dn"/></svg>
        <svg class="ls" width="21" height="25" viewBox="0 0 21 25"><path d="M1 1h14l5 5v18H1z" fill="#fafafa" stroke="#8c8c90" stroke-width="1.300"/><path d="M9 10h8M9 15h8M9 20h8" stroke="#666" stroke-width="1.200"/><path d="M4 8.500h3v3H4zM4 13.500h3v3H4zM4 18.500h3v3H4z" fill="none" stroke="#888"/></svg>
        <svg class="ar"><use href="#dn"/></svg>
        <svg class="hd" width="26" height="25" viewBox="0 0 26 25"><path d="M1 1h5v5H1zM1 10h5v5H1zM1 19h5v5H1zM3.500 6v4M3.500 15v4M6 12h4" fill="none" stroke="#b6b6ba"/><path d="M9 2h15v11M16 2v8" fill="none" stroke="#d4d4d8"/><path d="M12 18q6-6 12 0-6 6-12 0zM11 11l14 13" fill="none" stroke="#a0a0a4" stroke-width="1.500"/></svg>
      </div>
      <div class="frow"><svg width="20" height="20" viewBox="0 0 20 20"><path d="M1 1h18l-7 9v9H8v-9z" fill="#f0f0f2" stroke="#888c90" stroke-width="1.400"/></svg><div class="inp"><svg width="11" height="10"><use href="#x"/></svg></div><svg class="ar"><use href="#dn"/></svg><svg class="pl" width="14" height="14" viewBox="0 0 14 14"><path d="M7 0v14M0 7h14" stroke="#9a9a9e" stroke-width="3.600"/></svg></div>
      <div class="tr"><svg width="18" height="17" viewBox="0 0 20 20" preserveAspectRatio="none" class="a0"><use href="#cube"/></svg>STARTERBLADE.PRT</div>
      <div class="tr in"><svg width="9" height="11" viewBox="0 0 9 11"><path d="M0 0l9 5.500L0 11z" fill="#8c8c90"/></svg><svg width="21" height="21" class="a1"><use href="#bodies"/></svg><i>Bodies (1)</i></div>
      <div class="tr in2"><svg width="21" height="20"><use href="#csys"/></svg>STARTERBLADE</div>
      <div class="tr in2"><svg width="20" height="20" viewBox="0 0 20 20"><path d="M1 1h18v18H1zM10 1v18M1 10h18M1 1l18 18M10 1l9 9M1 10l9 9" fill="#e8fbff" stroke="#2f7f98" stroke-width="1.200"/></svg><i>Facet Feature id 5</i></div>
      <div class="green"></div>
      <div class="tr in2 last"><svg width="20" height="14" viewBox="0 0 20 14"><path d="M6 1h13l-5 11H1z" fill="none" stroke="#7d6a48" stroke-width="1.500"/></svg><svg class="sn" width="10" height="11" viewBox="0 0 10 11"><path d="M0 0l10 11M10 0L0 11M5 0v11M0 5.500h10" stroke="#8a8a20"/><circle cx="5" cy="5.500" r="2.800" fill="#f6ee1c"/></svg><i>Datum Plane id 7</i></div>
    </aside>
    <div class="view">
      <svg class="scene" viewBox="343 335 1486 599">
        <path d="M474 560L804 611.700 821 613.500 854 623 873 644 854 636.700 498 615.300z" fill="url(#gBlade)"/>
        <path d="M474 560L804 611.700 821 613.500 854 623 873 644 854 636.700 498 615.300z" fill="url(#gTop)"/>
        <path d="M800 611.500L821 614Q852 611 875 591L889 592.300 855 623.500 820 619z" fill="#33fff4"/>
        <path d="M800 619L855 623.500 883 646 873 644.300 854 636.700 780 632z" fill="#199692"/>
        <path d="M889 592.300L896 592 926.300 616 894.600 645 888 647 883 645.700 855 623.500z" fill="#24bdb9"/>
        <path d="M474 560L804 611.700 821 613.500M875 591h9" fill="none" stroke="#1c8b88" stroke-width="1" stroke-dasharray="4 12"/>
        <path d="M774.400 396.500L970.500 534 923 737.500 704 622.500z" fill="none" stroke="#dcae45" stroke-width="1.200"/>
        <path d="M889 596h14M896 589v14M915 612.700h14M922 606v14M880 646h15M888 640v14" stroke="#2fe05a" stroke-width="1.300"/>
        <path d="M648 605.500h8" stroke="#46ee6c" stroke-width="1.500"/><path d="M656 605.500h8" stroke="#7df" stroke-width="1.500"/><path d="M655.500 606v9" stroke="#a8324a" stroke-width="1.500"/>
        <circle cx="648.400" cy="605.300" r="3" fill="#3df05c"/><circle cx="664" cy="605.700" r="3.200" fill="#3ff8f8"/><circle cx="655.200" cy="617.300" r="3.800" fill="#f01838"/>
      </svg>
      <div class="vbar">
        <span><svg viewBox="0 0 22 22"><path d="M1 2h18v18H1z" fill="#f0f0f2" stroke="#aaa"/><use href="#mag" x="2" y="2" width="20" height="20"/></svg></span>
        <span><svg viewBox="0 0 22 22"><use href="#mag" width="22" height="22"/><path d="M9 5v8M5 9h8" stroke="#17648a" stroke-width="2.200"/></svg></span>
        <span><svg viewBox="0 0 22 22"><use href="#mag" width="22" height="22"/><path d="M5 9h8" stroke="#17648a" stroke-width="2.200"/></svg></span>
        <span><svg viewBox="0 0 22 22"><path d="M2 2h19v19H2z" fill="url(#gCyan)" stroke="#9ab"/><path d="M2 2h18L7 20H2z" fill="#fff"/><path d="M2 2.500h19" stroke="#2f86a8" stroke-width="2"/><path d="M7 19L19 6" stroke="#267b9b" stroke-width="2"/></svg></span>
        <span><svg viewBox="0 0 22 22"><path d="M2 17q0-5 6-4 3 0 3-5l4-4 5-2v8q-4 0-5 4-2 6-8 6-5 1-5-3z" fill="#88888c"/><path d="M4 16q5-1 8-4l4-7" fill="none" stroke="#d4d4d8" stroke-width="2"/></svg><em></em></span>
        <span><svg viewBox="0 0 22 22"><path d="M1 6l4-5h16v16l-4 5H1z" fill="#4fbcd8"/><path d="M1 6l4-5h16l-4 5z" fill="#e8ffff"/><path d="M1 6h16v15H1z" fill="#d8fdff" stroke="#8cc8d8"/></svg><em></em></span>
        <span><svg viewBox="0 0 22 22"><path d="M1 10l6-9h9l5 7v10H6z" fill="#c8f4fc" stroke="#3f93ab" stroke-width="1.300"/><path d="M1 10h14L21 8M15 10L12 2M15 10v9" fill="none" stroke="#3f93ab" stroke-width="1.300"/><path d="M14 12h7v10h-7z" fill="#fff" stroke="#777"/><path d="M16 15h3M16 18h3" stroke="#666"/></svg><em></em></span>
        <span><svg viewBox="0 0 22 22"><path d="M1 1h18v17H1zM1 5h18M1 9h18M1 13h18M7 1v17" fill="#fafafa" stroke="#999"/><path d="M9 12h3l2-2h3l2 2h3v9H9z" fill="#333"/><circle cx="15.500" cy="16.500" r="3" fill="#fff"/><circle cx="15.500" cy="16.500" r="1.700" fill="#333"/></svg></span>
        <span class="sel"><svg viewBox="0 0 22 22"><path d="M2 8L10 2l11-1v15l-8 5-11-2z" fill="#cdf4fb" stroke="#3f93ab"/><path d="M2 8l12-1 7-6M14 7l-1 14M6 8v8l7 4M6 16L2 19M10 2v6" fill="none" stroke="#4d9fb6"/><path d="M7 9h6v8l-6-1z" fill="#7fc6d8"/></svg></span>
        <span><svg viewBox="0 0 22 22"><path d="M1 1l5 6M6 1L1 7M13 1l-2 4M9 8l-2 5M6 16l-2 5M14 19V9M14 17h7M14 17l-4 4M12 11l2-3 2 3M19 15l2 2-2 2" fill="none" stroke="#8a7140" stroke-width="1.600"/></svg><em></em></span>
        <span class="sel"><svg viewBox="0 0 22 22"><path d="M1 2h12v7H1z" fill="#fff" stroke="#777"/><path d="M14 5h6v6M17 9l3 3 2-3" fill="none" stroke="#333" stroke-width="1.400"/><path d="M10 18q6-7 12 0-6 6-12 0z" fill="#fff" stroke="#333" stroke-width="1.400"/><circle cx="16" cy="18" r="2" fill="#333"/></svg></span>
        <span class="sel"><svg viewBox="0 0 22 22"><path d="M4 5l6 6-5 7M10 11h8" fill="none" stroke="#333" stroke-width="1.600"/><circle cx="4.500" cy="4.500" r="3.300" fill="#58b05c"/><circle cx="18" cy="11" r="3.300" fill="#e86464"/><circle cx="5" cy="18" r="3.300" fill="#3f94b8"/></svg></span>
        <span><svg viewBox="0 0 22 22"><path d="M10 2l9 17H1zM10 9l3 6H7z" fill="#f0f0f2" stroke="#a8a8ac" stroke-width="1.600"/><circle cx="17" cy="17" r="4.500" fill="#e4e4e8" stroke="#aaa"/></svg></span>
        <span><svg viewBox="0 0 22 22"><path d="M4 3h5v16H4zM13 3h5v16h-5z" fill="#98989c"/></svg></span>
        <span><svg viewBox="0 0 22 22"><path d="M8 4h13v14H8z" fill="#f4f4f6" stroke="#bcbcc0"/><path d="M1 4h10q4 6 0 13H3q6-3 6-7-1-4-8-6z" fill="#cfcfd3"/></svg></span>
      </div>
    </div>
  </div>

  <div class="status">
    <span class="tb"><svg width="15" height="20"><use href="#tree"/></svg></span>
    <svg class="gl" width="20" height="20" viewBox="0 0 20 20"><circle cx="10" cy="10" r="7.500" fill="#2f9ccf"/><path d="M6 5q4-2 6 1l-3 5-4-1zM12 10l4 1-3 5z" fill="#d8f2fc"/><path d="M1 19Q-1 13 7 6q9-7 12-4 1 5-6 12T1 19z" fill="none" stroke="#8f969c" stroke-width="1.200"/></svg>
    <svg class="pg" width="21" height="21" viewBox="0 0 21 21"><path d="M1 1h19v19H1z" fill="#f2fbfd" stroke="#5b8c9e" stroke-width="1.500"/></svg>
    <div class="hint"><svg width="15" height="14" viewBox="0 0 15 14"><path d="M1 4h6V1l7 6-7 6v-3H1z" fill="#46b8e0" stroke="#1f6f90"/></svg><i>Select up to 3 references, such as plane, surface, edge or point to place plane.</i></div>
    <div class="sr">
      <div class="bars"></div>
      <div class="bino"><span><svg width="20" height="18" viewBox="0 0 20 18"><path d="M3 1h5v4h4V1h5l3 12v4h-7v-6H7v6H0v-4z" fill="#4a4a4e"/><path d="M3 7L1 14M16 7l2 7" stroke="#c8c8cc" stroke-width="1.600"/></svg></span><span class="d"><svg class="ar"><use href="#dn"/></svg></span></div>
      <div class="nsel">3 selected</div>
      <div class="combo"><span>All</span><em><svg class="ar"><use href="#dn"/></svg></em></div>
      <svg class="grip" width="14" height="14" viewBox="0 0 14 14"><path d="M0 14L14 1M5 14l9-8M10 14l4-4" stroke="#b0b0b4" stroke-width="1.300"/></svg>
    </div>
  </div>
</div>

<div class="dialog">
  <div class="dh"><span>Datum Plane</span><svg viewBox="0 0 12 12"><path d="M1.500 1.500l9 9M10.500 1.500l-9 9" stroke="#97979b" stroke-width="2.800"/></svg></div>
  <div class="dtabs"><span class="on">Placement</span><span>Display</span><span class="p">Properties</span></div>
  <div class="dp">
    <label>References</label>
    <div class="refs"><div><span>Facet Vertex.</span><span>Through<svg class="ar"><use href="#dn"/></svg></span></div><div><span>Facet Vertex.</span><span>Through<svg class="ar"><use href="#dn"/></svg></span></div><div><span>Facet Vertex.</span><span>Through<svg class="ar"><use href="#dn"/></svg></span></div></div>
    <label class="dim">Offset</label>
    <div class="trn"><span>Translation</span><div><em><svg class="ar"><use href="#dn"/></svg></em></div></div>
  </div>
  <div class="db"><button class="ok">OK</button><button>Cancel</button></div>
</div>
</div>

<div class="bar1">
  <span><svg width="20" height="20"><use href="#win"/></svg></span>
  <span><svg width="20" height="19"><use href="#tview"/></svg></span>
  <span class="w"><svg width="28" height="28" viewBox="0 0 28 28"><path d="M25 16H10q0 5 6 5 4 0 8-2v5q-4 3-9 3Q3 26 3 15 4 4 14.500 4 26 4 25 16zM10 12h9Q19 8 14.500 8T10 12z" fill="#4fc8f4"/><path d="M3 27q-4-6 4-15T22 2q6 0 3 7Q25 4 19 4 9 7 5 17q-2 5 0 8z" fill="#f4c52c"/></svg></span>
  <span class="w"><svg width="29" height="27" viewBox="0 0 28 27"><path d="M1 1h10l2 3h13v19H1z" fill="#f2cf5c"/><path d="M1 5h26v18H1z" fill="#fff0a8"/><path d="M6 24v-8q0-2 2-2h12q2 0 2 2v8h-5v-5h-6v5z" fill="#4fb8e8"/></svg></span>
  <span class="w cur"><svg width="30" height="29" viewBox="0 0 30 29"><path d="M1 4l4-3h23v24l-4 3H1z" fill="#86d6e0"/><path d="M1 4l4-3h23l-4 3z" fill="#f2ffff"/><path d="M1 4h23v24H1z" fill="#b9fbfc"/></svg></span>
  <div class="tray">
    <svg width="16" height="9" viewBox="0 0 16 9"><path d="M1 8l7-7 7 7" fill="none" stroke="#ddd" stroke-width="1.800"/></svg>
    <svg width="22" height="18" viewBox="0 0 22 18"><path d="M1 6h3l5-4v14l-5-4H1zM12 6q2 3 0 6M15 4q4 5 0 10M18 2q5 7 0 14" fill="none" stroke="#ddd" stroke-width="1.400"/></svg>
    <div class="clk">8:57 PM<br>4/4/2021</div>
    <svg width="20" height="20" viewBox="0 0 20 20"><path d="M1 1h18v14h-6l-3 3.500L7 15H1z" fill="none" stroke="#eee" stroke-width="1.600"/></svg>
  </div>
</div>

<div class="bar2">
  <span class="s"><svg width="20" height="20"><use href="#win"/></svg></span>
  <div class="search"><svg width="20" height="20" viewBox="0 0 20 20"><circle cx="12.500" cy="7.500" r="6.500" fill="none" stroke="#222" stroke-width="1.500"/><path d="M8 12l-8 8" stroke="#222" stroke-width="1.500"/></svg><span>Type here to search</span></div>
  <div class="apps">
    <span><svg width="20" height="20" viewBox="0 0 20 20"><circle cx="10" cy="10" r="8.300" fill="none" stroke="#fff" stroke-width="2.600"/></svg></span>
    <span><svg width="21" height="20"><use href="#tview"/></svg></span>
    <span class="run cur"><svg viewBox="0 0 30 30"><circle cx="15" cy="15" r="15" fill="url(#gEdge)"/><path d="M0 13Q2 1 15 0q14 1 15 13-1 7-9 7-5-1-3-4 2-6-4-8Q5 6 0 13z" fill="url(#gEdge2)"/><path d="M18 12q-3 3-1 8 4 4 12 1-1 3-5 6-13 0-14-9 0-6 8-6z" fill="#1157a8"/><path d="M18 14q2 2 0 4 1 3 6 2.500l6-2-1 4q-9 3-13-3-1-3 2-5.500z" fill="#5c4c47"/></svg></span>
    <span class="run"><svg viewBox="0 0 30 30"><circle cx="15" cy="15" r="13.500" fill="#fbc02d"/><path d="M15 15L3.300 8.200A13.500 13.500 0 0 1 26.700 8.200z" fill="#dc4a3d"/><path d="M15 9h12a13.500 13.500 0 0 0-24-1l6 9z" fill="#dc4a3d"/><path d="M3 8a13.500 13.500 0 0 0 11 20.500l5-9-8-2z" fill="#33a852"/><circle cx="15" cy="15" r="6.300" fill="#fff"/><circle cx="15" cy="15" r="5" fill="#4a80ec"/></svg></span>
    <span class="run"><svg><use href="#folder"/></svg></span>
    <span><svg viewBox="0 0 30 30"><path d="M15 4h13v22H15z" fill="#fff" stroke="#2b579a" stroke-width="1.500"/><path d="M17 8h9M17 12h9M17 16h9M17 20h9" stroke="#2b579a" stroke-width="1.600"/><path d="M2 4l16-3v28L2 26z" fill="#2b579a"/><path d="M5 10l2 10 3-9 3 9 2-10" fill="none" stroke="#fff" stroke-width="1.900"/></svg></span>
    <span><svg viewBox="0 0 30 30"><path d="M15 4h13v22H15z" fill="#fff" stroke="#217346" stroke-width="1.500"/><path d="M19 8h9M19 12h9M19 16h9M19 20h9M22 5v20" stroke="#217346" stroke-width="1.500"/><path d="M2 4l16-3v28L2 26z" fill="#217346"/><path d="M6 9l7 11M13 9L6 20" stroke="#fff" stroke-width="2.200"/></svg></span>
    <span><svg viewBox="0 0 30 30"><path d="M15 4h13v22H15z" fill="#fff" stroke="#d24726" stroke-width="1.500"/><circle cx="21" cy="11" r="4" fill="#d24726"/><path d="M18 18h9M18 22h9" stroke="#d24726" stroke-width="1.600"/><path d="M2 4l16-3v28L2 26z" fill="#d24726"/><path d="M7 21V10h3q4 0 4 3.500T10 17H7" fill="none" stroke="#fff" stroke-width="2.300"/></svg></span>
    <span><svg viewBox="0 0 30 30"><circle cx="15" cy="15" r="14" fill="url(#gSteam)"/><path d="M1 16l8 4 8-9M9 20l10-5" stroke="#fff" stroke-width="4"/><circle cx="20" cy="11" r="5" fill="#fff"/><circle cx="20" cy="11" r="3.300" fill="none" stroke="#1a3358" stroke-width="1.200"/><circle cx="9.500" cy="20" r="4" fill="#fff"/></svg></span>
    <span><svg viewBox="0 0 30 30"><path d="M9 9V2h12v7" fill="none" stroke="#ddd" stroke-width="2.200"/><path d="M0 8h30v22H0z" fill="#f2f2f2"/><path d="M9 13.500h5.500V19H9z" fill="#f25022"/><path d="M15.500 13.500H21V19h-5.500z" fill="#7fba00"/><path d="M9 20h5.500v5.500H9z" fill="#00a4ef"/><path d="M15.500 20H21v5.500h-5.500z" fill="#ffb900"/></svg></span>
    <span><svg viewBox="0 0 30 30"><path d="M0 0h30v30H0z" fill="#fff"/><path d="M4 18l8-6 7-4 9 3v15l-8 2-8-5z" fill="#f42a36"/><path d="M4 18l4 1M10 13l3 2M22 10l5 3M20 27l5-3M14 22l5 2M24 18l3 3" stroke="#2a1ca8" stroke-width="1.600"/><path d="M5 2H2v3h2v3H1M9 8V2h3l-1 3 2 3M15 8l2-6 2 6M20 8V2l2 4 2-4v6" fill="none" stroke="#111" stroke-width="1.500"/></svg></span>
    <span><svg viewBox="0 0 30 30"><rect x="1" y="1" width="28" height="28" rx="6" fill="#fff"/><path d="M8 22a5 5 0 0 1-1-9q1-3 4-2 5-7 10 1 1 1 0 2 6 1 5 5-1 3-4 3z" fill="#3f9cf2"/></svg></span>
    <span><svg viewBox="0 0 30 30"><circle cx="15" cy="15" r="13" fill="#0a9ce4"/><circle cx="9" cy="9" r="8" fill="#0ab0f0"/><circle cx="21" cy="21" r="8" fill="#0a8cd8"/><path d="M19.500 10q-4-3-8-1-3 4 3 5.500 7 2 4.500 5.500-4 3-8.500 0" fill="none" stroke="#fff" stroke-width="2.800"/></svg></span>
    <span class="bdg"><svg viewBox="0 0 30 30"><path d="M0 10L15 0l15 10v19H0z" fill="#0f62b4"/><path d="M3 9h24v10H3z" fill="#f2f4f8"/><path d="M0 10l15 9 15-9v19H0z" fill="#2aa6ea"/><path d="M0 10l15 9L0 29z" fill="#1f8fdc"/></svg><em>4</em></span>
    <span><svg viewBox="0 0 30 30"><path d="M15 1l12 6v16l-12 6-12-6V7z" fill="#d8d4d4" stroke="#8a8484"/><path d="M8 7h14v5l-8 8h8v5H8v-5l8-8H8z" fill="#d02028" stroke="#8c1018"/></svg></span>
    <span><svg viewBox="0 0 30 30"><path d="M1 17l10-5 4 4-5 7z" fill="#3a9ac8"/><path d="M11 12q5-3 9-11 4 7 9 22-5-4-8-1-4 6-8 6-1-5-5-7 5-4 3-9z" fill="#e0701c"/><path d="M20 1q-1 10-7 27-2-5-5-7 8-7 12-20z" fill="#8a2c14"/><path d="M20 1q4 7 9 22-5-5-8 0z" fill="#f4a02c"/></svg></span>
    <span><svg viewBox="0 0 30 30"><rect width="30" height="30" rx="2" fill="#1b7490"/><path d="M4 7h18v12H4z" fill="#5fb4cc" stroke="#d4eef4" stroke-width="1.500"/><path d="M17 12h9v12h-9z" fill="#7cc4d8" stroke="#d4eef4"/><path d="M9 22h8M13 19v3" stroke="#d4eef4" stroke-width="2"/><path d="M10 12h6v5h-6zM11 12q2-5 4 0" fill="#143c50" stroke="#143c50"/></svg></span>
    <span><svg viewBox="0 0 30 30"><path d="M0 3h30v24H0z" fill="#2e9be8"/><path d="M5 27V18l7-8 6 8 4-3 4 4v8z" fill="#10407a"/><path d="M0 3h5v24H0zM25 3h5v24h-5z" fill="#1860b0"/><path d="M2.500 5v21M27.500 5v21" stroke="#fff" stroke-width="2.400" stroke-dasharray="3 2.500"/></svg></span>
  </div>
  <div class="tray2">
    <svg class="red" width="26" height="26" viewBox="0 0 26 26"><ellipse cx="13" cy="13" rx="12.500" ry="12.800" fill="#d80f22"/><path d="M5 7q7 0 8 5 1-5 8-5M13 11v11" fill="none" stroke="#3a1013" stroke-width="2.400"/></svg>
    <svg width="16" height="9" viewBox="0 0 16 9"><path d="M1 8l7-7 7 7" fill="none" stroke="#fff" stroke-width="1.400"/></svg>
    <svg width="20" height="16" viewBox="0 0 20 16"><path d="M5 5h13v8H5z" fill="#fff"/><path d="M5 4.500h13.500v9H4V9M19.500 7v4M1 1v2M5 1v2M0 4h6q0 4-3 4T0 4" fill="none" stroke="#fff" stroke-width="1.200"/></svg>
    <svg width="17" height="17" viewBox="0 0 17 17"><path d="M1 14Q2 3 14 1M5 15q1-9 10-10M9 16q0-6 7-7M12.500 16q0-3 3.500-3.500" fill="none" stroke="#eee" stroke-width="1.300"/></svg>
    <div class="clk">8:57 PM<br>4/4/2021</div>
    <span class="note"><svg width="20" height="20" viewBox="0 0 20 20"><path d="M0 0h20v16h-7l-3 4-3-4H0z" fill="#fff"/><path d="M4 4.500h12M4 8.500h12M4 12.500h8" stroke="#222" stroke-width="1.300"/></svg><em>3</em></span>
  </div>
</div>
</body>
</html>
```
FILE: styles.css
```css
* { box-sizing: border-box; }
body { margin: 0; width: 1920px; height: 1080px; overflow: hidden; font-family: "Open Sans", "Noto Sans", sans-serif; font-size: 15px; letter-spacing: -.6px; color: #4a4a4e; background: #000; }
svg { display: block; flex: none; }
i { font-style: normal; }
.defs { position: absolute; width: 0; height: 0; }
.ar { width: 10px; height: 6px; color: #555; }
.ar.l { color: #a9a9ad; }

/* browser tabs */
.tabs { display: flex; height: 40px; background: #cdcdcd; color: #1a1a1a; align-items: center; letter-spacing: -.35px; }
.pin { display: flex; align-items: center; justify-content: center; height: 25px; border-right: 1px solid #888; }
.p1 { width: 60px; }
.p2 { width: 49px; }
.tab { width: 258px; height: 40px; display: flex; align-items: center; padding-left: 13px; position: relative; }
.tab + .tab + .tab + .tab:after, .tab.on + .tab:after { content: ""; position: absolute; right: 0; top: 8px; height: 25px; width: 1px; background: #888; }
.tab.on { background: #f7f7f7; border-radius: 8px 8px 0 0; }
.fav { width: 20px; height: 20px; }
.tt { width: 178px; margin-left: 12px; padding-bottom: 2px; white-space: nowrap; -webkit-mask-image: linear-gradient(90deg, #000 84%, transparent); mask-image: linear-gradient(90deg, #000 84%, transparent); }
.cx { width: 12px; height: 12px; margin-left: 9px; }
.plus { width: 17px; height: 17px; margin-left: 12px; }
.winbtns { display: flex; gap: 43px; margin-left: auto; padding: 0 22px 2px 0; }

/* address row */
.address { display: flex; align-items: center; height: 49px; background: #f7f7f7; border-bottom: 2px solid #cdcdcd; padding-left: 25px; }
.nav { width: 20px; height: 18px; margin-right: 35px; }
.nav.dark { height: 20px; margin-right: 25px; }
.urlbox { display: flex; align-items: center; width: 1500px; height: 38px; background: #fff; border-radius: 6px; padding-left: 19px; }
.url { width: 1385px; padding-left: 20px; font-size: 20px; white-space: nowrap; color: #767676; letter-spacing: -.465px; }
.url b { font-weight: 400; color: #111; }
.star { margin-left: 29px; }
.tools { display: flex; align-items: center; margin-left: 24px; gap: 32px; }
.tools svg:nth-child(3) { margin-left: 1px; }
.tools svg:nth-child(4) { margin-left: 3px; }

/* remote session toolbar */
.apporto { display: flex; align-items: center; height: 38px; background: linear-gradient(#fff, #f4f7fb 40%, #dde5f1); padding-left: 20px; color: #111; font-size: 20px; letter-spacing: -.5px; }
.apporto > svg { width: 40px; height: 30px; margin-right: 40px; }
.fillgap { flex: 1; }
.apporto > .sig { width: 30px; margin-right: 26px; }
.atime { width: 158px; white-space: nowrap; letter-spacing: -.65px; }
.aact { width: 81px; letter-spacing: -.1px; }
.apporto > .spark { width: 110px; height: 33px; align-self: flex-end; margin-right: 34px; }
.apporto > .gear { width: 32px; height: 32px; margin-right: 24px; }

.remote { height: 854px; position: relative; background: #000; }
.creo { width: 1833px; height: 854px; border: 5px solid #a9a9ad; border-width: 5px 4px 4px 5px; background: #fff; }

.ctitle { display: flex; align-items: center; height: 35px; background: #ebeef1; }
.clogo { margin-left: 15px; }
.cname { width: 66px; margin-left: 8px; font: 23px/30px Lato, sans-serif; color: #4b5056; letter-spacing: .2px; padding-bottom: 5px; }
.cname sup { font-size: 8px; vertical-align: 9px; margin-left: -1px; }
.qat { display: flex; align-items: center; border: 1px solid #bbb; border-width: 0 1px; height: 30px; width: 297px; padding-left: 6px; }
.qat svg { width: 20px; height: 20px; margin-right: 10px; }
.qat .ar { width: 9px; height: 6px; margin: 0 11px 0 -1px; }
.qat .ar.n { margin-right: 7px; }
.qend { margin-left: 8px; }
.cdoc { margin-left: 264px; white-space: nowrap; font-size: 16px; width: 1038px; color: #55585d; letter-spacing: -.19px; }
.cbtns { display: flex; gap: 20px; padding-bottom: 2px; }
.cbtns svg { width: 14px; height: 14px; }

.rtabs { display: flex; height: 34px; background: #353c40; color: #eef0f0; font-size: 16px; letter-spacing: -.25px; line-height: 35px; text-align: center; }
.file { width: 74px; background: linear-gradient(160deg, #6cf044, #55c739); }
.model { width: 106px; background: #fff; color: #4c8f3c; }
.w1 { width: 114px; } .w2 { width: 168px; } .w3 { width: 122px; } .w4 { width: 100px; } .w5 { width: 90px; } .w6 { width: 190px; } .w7 { width: 146px; }
.rright { display: flex; align-items: center; margin-left: auto; gap: 13px; padding-right: 11px; height: 31px; }
.rright b { font-size: 17px; }

.ribbon { display: flex; height: 134px; border-bottom: 2px solid #d0d2d4; }
.g { display: flex; flex-direction: column; border-right: 1px solid #c4c4c8; height: 128px; margin-top: 2px; }
.g1 { width: 186px; } .g2 { width: 183px; } .g3 { width: 174px; } .g4 { width: 272px; } .g5 { width: 184px; } .g6 { width: 204px; } .g7 { width: 322px; } .g8 { width: 175px; } .g9 { width: 113px; }
.gb { display: flex; height: 101px; margin-left: -1px; }
.g h3 { margin: 4px 0 0; font-weight: 400; font-size: 15px; display: flex; justify-content: center; align-items: center; gap: 5px; height: 23px; line-height: 23px; color: #4a4a50; white-space: nowrap; }
.big { display: flex; flex-direction: column; align-items: center; text-align: center; padding-top: 5px; line-height: 19px; color: #3c3c40; white-space: nowrap; }
.big span { margin-top: 13px; }
.big .ar { margin-top: 5px; }
.bi { width: 38px; height: 38px; }
.col { margin-top: -2px; }
.col > div { display: flex; align-items: center; height: 33px; white-space: nowrap; color: #3c3c40; }
.col > div > svg:first-child { width: 20px; height: 20px; margin-right: 5px; color: #c2c2c6; }
.col .ar { margin-left: 8px; }
.off, .col.off > div { color: #b7b5bc; }
.col.off > div.act { color: #333; }
.g1 .big { width: 91px; }
.g1 .col { margin-left: 2px; }
.g2 .col, .g3 .col, .g6 .col { margin-left: 10px; }
.g1 .col > div > svg:first-child, .g2 .col > div > svg:first-child { margin-right: 6px; }
.plane { width: 50px; height: 100px; margin-left: 4px; background: #eeeff2; border: 1px solid #b4b4bc; padding-top: 4px; }
.g4 .col { width: 150px; margin-left: 6px; }
.sk { width: 62px; margin-left: 1px; }
.g5 .big { width: 67px; }
.g5 .col { margin-left: 1px; }
.g6 .col { width: 109px; }
.g6 .c2 { margin-left: 0; width: 82px; }
.g7 .big { width: 66px; }
.g7 .col { width: 77px; margin-left: 2px; }
.g7 .c2 { width: 91px; margin-left: 0; }
.g7 .c3 { margin-left: 0; }
.g8 .big { width: 82px; }
.g8 .col { margin-left: 2px; }
.g9 .big { width: 112px; }

/* work area */
.work { display: flex; height: 599px; }
.side { width: 338px; border-right: 3px solid #e6eaed; color: #55555a; letter-spacing: -.45px; }
.stabs { display: flex; height: 37px; background: #e9ecef; letter-spacing: -.5px; }
.st { display: flex; align-items: center; height: 37px; padding-bottom: 2px; }
.st i { white-space: nowrap; }
.st.on { width: 124px; background: #fff; padding-left: 13px; }
.st.on i { margin-left: 8px; }
.st.b { padding-left: 10px; width: 116px; }
.st.b i, .st.c i { margin-left: 4px; width: 58px; -webkit-mask-image: linear-gradient(90deg, #000 70%, transparent); mask-image: linear-gradient(90deg, #000 70%, transparent); }
.st.c i { margin-left: 7px; -webkit-mask-image: linear-gradient(90deg, #000 85%, transparent); mask-image: linear-gradient(90deg, #000 85%, transparent); }
.srow { display: flex; align-items: center; height: 34px; padding-left: 35px; }
.srow b { width: 153px; font-weight: 700; letter-spacing: -.65px; }
.srow .ar { margin-left: 10px; }
.ls { margin-left: 12px; }
.srow .ls + .ar { margin-left: 10px; }
.hd { margin-left: 15px; }
.frow { display: flex; align-items: center; height: 34px; padding-left: 15px; }
.inp { width: 235px; height: 33px; margin-left: 5px; border: 1px solid #b0b8ba; display: flex; align-items: center; justify-content: flex-end; padding-right: 6px; color: #999; }
.frow .ar { margin-left: 7px; }
.pl { margin-left: 14px; }
.tr { display: flex; align-items: center; height: 25px; padding-left: 14px; letter-spacing: -1.1px; white-space: nowrap; }
.frow + .tr { margin-top: 6px; }
.a0 { margin-right: 8px; }
.tr i { letter-spacing: -.55px; }
.tr.in { padding-left: 21px; }
.a1 { margin: 0 6px 0 8px; }
.tr.in2 { padding-left: 39px; }
.in2 svg:first-child { margin-right: 6px; }
.green { width: 319px; height: 3px; margin: 8px 0 7px 10px; background: #66e44a; }
.tr .sn { margin-right: 2px; }
.last svg:first-child { margin-right: 5px; }

.view { width: 1486px; height: 599px; position: relative; background: linear-gradient(#f2ffff, #e0ffff 50%, #ccffff); }
.scene { width: 1486px; height: 599px; }
.vbar { position: absolute; left: 493px; top: 8px; width: 500px; height: 39px; background: #fff; border: 1px solid #a9b6b8; display: flex; align-items: center; padding-left: 3px; }
.vbar span { width: 28px; height: 28px; margin: 0 2.430px; display: flex; align-items: center; justify-content: center; position: relative; border: 1px solid transparent; }
.vbar svg { width: 20px; height: 20px; }
.vbar .sel { background: #edeff2; border-color: #a8a8b0; }
.vbar em { position: absolute; right: 0; bottom: 0; border: 2.500px solid #555; border-color: transparent #555 #555 transparent; }

.status { display: flex; align-items: center; height: 43px; border-top: 2px solid #ccd0d2; padding: 1px 0 0 8px; }
.tb { width: 27px; height: 28px; border: 1px solid #a8a8b0; background: #edeff2; display: flex; align-items: center; justify-content: center; color: #444; }
.gl { margin-left: 9px; }
.pg { margin-left: 12px; }
.hint { display: flex; align-items: center; margin-left: 15px; height: 28px; padding: 0 0 4px 3px; border-left: 1px solid #bbb; color: #55555a; }
.hint i { margin-left: 2px; letter-spacing: -.54px; white-space: nowrap; }
.sr { display: flex; align-items: center; margin-left: auto; height: 38px; padding-bottom: 2px; }
.bars { width: 7px; height: 32px; border: 1px solid #bbb; border-width: 0 1px; }
.bino { display: flex; width: 53px; height: 30px; margin-left: 3px; border: 1px solid #c0c0c8; }
.bino span { width: 33px; display: flex; align-items: center; justify-content: center; }
.bino .d { width: 19px; border-left: 1px solid #c0c0c8; }
.nsel { width: 113px; margin-left: 3px; padding-left: 5px; border-left: 1px solid #bbb; height: 32px; line-height: 31px; letter-spacing: -.72px; }
.combo { display: flex; width: 206px; height: 30px; border: 1px solid #a9b6b8; }
.combo span { flex: 1; padding-left: 9px; line-height: 28px; }
.combo em { width: 19px; border-left: 1px solid #a9b6b8; display: flex; align-items: center; justify-content: center; }
.grip { margin: 18px 3px 0 6px; }

/* datum plane dialog */
.dialog { position: absolute; left: 1573px; top: 208px; width: 347px; height: 427px; background: #fff; border-bottom: 1px solid #999; padding: 0 3px 0 2px; color: #4a4a50; }
.dh { display: flex; align-items: center; justify-content: center; height: 37px; padding: 3px 0 0; background: #f9f8fc; color: #aaa8ae; position: relative; letter-spacing: -.4px; }
.dh svg { position: absolute; right: 11px; top: 14px; width: 12px; height: 12px; }
.dtabs { display: flex; margin: 26px 0 0 13px; height: 28px; color: #88868e; text-align: center; line-height: 27px; letter-spacing: -.5px; }
.dtabs span { width: 73px; border: 1px solid #e0e0e6; border-left: 0; border-bottom: 0; }
.dtabs .on { width: 94px; border-left: 1px solid #d8d8de; color: #333; background: #fff; position: relative; z-index: 1; height: 29px; letter-spacing: -.6px; }
.dtabs .p { width: 92px; }
.dp { width: 317px; height: 259px; margin: -1px 0 0 13px; border: 1px solid #dcdce2; padding: 5px; }
label { display: block; line-height: 20px; }
.refs { height: 143px; margin-top: 5px; border: 1px solid #bcbcc4; background: #fffff2; padding: 1px 11px 0 19px; color: #333; }
.refs div { display: flex; justify-content: space-between; height: 33.700px; line-height: 34px; letter-spacing: -.75px; }
.refs div span + span { letter-spacing: -.5px; }
.refs span { display: flex; align-items: center; gap: 3px; }
.refs .ar { margin-bottom: 2px; }
.dim { margin-top: 14px; color: #c0bcc6; }
.trn { display: flex; align-items: center; margin: 9px 0 0 7px; color: #c0bcc6; letter-spacing: -.3px; }
.trn span { width: 80px; padding-bottom: 1px; }
.trn div { width: 101px; height: 29px; border: 1px solid #b4b4bc; display: flex; justify-content: flex-end; }
.trn em { width: 19px; border-left: 1px solid #b4b4bc; display: flex; align-items: center; justify-content: center; }
.db { margin-top: 21px; border-top: 1px solid #dcdce0; padding: 12px 12px 0; display: flex; justify-content: flex-end; gap: 10px; }
button { width: 70px; height: 29px; font: inherit; letter-spacing: -.6px; background: #fff; border: 1px solid #b8b8be; color: #4a4a50; padding: 0 0 2px; }
.ok { background: #aff4ff; border-color: #84dcf8; }

/* remote taskbar */
.bar1 { display: flex; height: 49px; background: linear-gradient(90deg, #000 1360px, #222224 1400px, #262628 1760px, #000 1850px); }
.bar1 > span { width: 60px; display: flex; align-items: center; justify-content: center; padding-top: 2px; }
.bar1 > span.w { width: 62px; }
.bar1 > span:nth-child(3) { margin-left: 3px; }
.bar1 > span.cur { width: 56px; background: #2e2d30; border-bottom: 2px solid #5f93b8; }
.tray { display: flex; align-items: center; margin-left: auto; color: #e8e8e8; border-right: 1px solid #555; height: 49px; margin-right: 5px; padding: 1px 25px 0 0; }
.tray svg:nth-child(2) { margin-left: 10px; }
.clk { width: 88px; text-align: center; font-size: 15px; line-height: 23px; letter-spacing: -.75px; padding-left: 1px; }
.tray .clk { margin: 0 12px 0 0; }

/* host taskbar */
.bar2 { display: flex; height: 50px; background: linear-gradient(90deg, #33211b, #2b1f1f 30%, #38231a 45%, #2c1d18 60%, #35211a 85%, #3a251c); align-items: center; }
.s { width: 60px; display: flex; justify-content: center; }
.search { display: flex; align-items: center; width: 430px; height: 49px; background: #f1f1f1; border: 1px solid #b8b8b8; padding-left: 14px; color: #2a2a2a; font-size: 19px; letter-spacing: -.62px; }
.search span { margin-left: 15px; }
.apps { display: flex; }
.apps span { width: 61px; height: 50px; display: flex; align-items: center; justify-content: center; position: relative; }
.apps svg { width: 29px; height: 29px; }
.apps span:nth-child(-n+2) svg { width: 20px; height: 20px; }
.apps span:nth-child(2) { width: 63px; }
.apps span:nth-child(n+15) { width: 60px; }
.apps .run:after { content: ""; position: absolute; left: 5px; right: 5px; bottom: 0; height: 3px; background: #76b9ed; }
.apps .cur { background: #5c4c47; }
.apps .cur:after { left: 0; right: 0; }
.bdg em, .note em { position: absolute; left: 36px; top: 23px; width: 21px; height: 21px; border: 1px solid #999; border-radius: 50%; background: #2c2c2c; color: #fff; font: 14px/19px "Open Sans", sans-serif; text-align: center; }
.tray2 { display: flex; align-items: center; margin-left: auto; color: #f0f0f0; height: 50px; border-right: 1px solid #776; margin-right: 5px; padding-right: 25px; }
.tray2 > svg { margin-right: 12px; }
.tray2 > .red { margin-right: 27px; }
.tray2 .clk { width: 84px; margin-left: -7px; margin-right: 16px; }
.note { position: relative; }
.note em { left: 9px; top: 8px; }
```
